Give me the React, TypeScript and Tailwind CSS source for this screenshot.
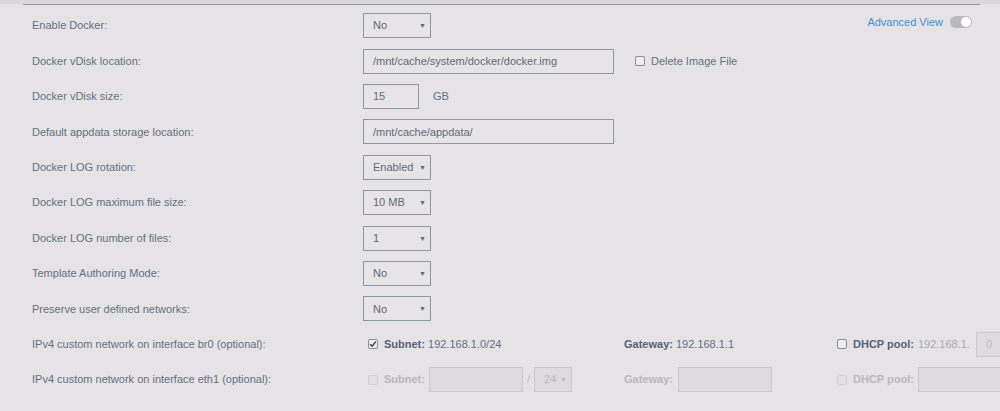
import React from "react";

function Select({ value, width = "w-[68px]", disabled = false }: { value: string; width?: string; disabled?: boolean }) {
  return (
    <div
      className={`flex h-[25px] shrink-0 items-center justify-between border pl-[9px] pr-[4px] text-[11px] ${width} ${
        disabled ? "border-[#c9c8cc] bg-[#dddbde] text-[#b9b8bc]" : "border-[#8f97a2] bg-[#e6e4e7] text-[#5f6a78]"
      }`}
    >
      <span>{value}</span>
      <span className="text-[7px] leading-none">▼</span>
    </div>
  );
}

function Input({ value = "", width, disabled = false }: { value?: string; width: string; disabled?: boolean }) {
  return (
    <div
      className={`flex h-[25px] shrink-0 items-center border pl-[9px] text-[11px] ${width} ${
        disabled ? "border-[#c9c8cc] bg-[#dddbde] text-[#b9b8bc]" : "border-[#8f97a2] bg-[#e6e4e7] text-[#5f6a78]"
      }`}
    >
      {value}
    </div>
  );
}

function Check({ checked = false, disabled = false }: { checked?: boolean; disabled?: boolean }) {
  return (
    <span
      className={`flex h-[10px] w-[10px] shrink-0 items-center justify-center rounded-[2px] border ${
        disabled ? "border-[#cfced2] bg-[#e2e0e3]" : "border-[#8a8f98] bg-[#ecebee]"
      }`}
    >
      {checked && (
        <svg viewBox="0 0 10 10" className="h-[8px] w-[8px]">
          <path d="M1.5 5.2 L4 7.6 L8.5 2" fill="none" stroke="#3c3f46" strokeWidth="1.8" />
        </svg>
      )}
    </span>
  );
}

function Row({ label, children }: { label: string; children?: React.ReactNode }) {
  return (
    <div className="flex h-[35.4px] items-center whitespace-nowrap">
      <div className="w-[331px] shrink-0 text-[11px] text-[#647081]">{label}</div>
      <div className="flex items-center">{children}</div>
    </div>
  );
}

export default function App() {
  return (
    <div className="relative h-[411px] w-[1000px] overflow-hidden bg-[#e5e3e6]" style={{ fontFamily: '"Liberation Sans", Arial, sans-serif' }}>
      <div className="h-[4px] bg-[#d9d7dc]" />
      <div className="ml-[23px] mr-[20px] h-px bg-[#8f97a3]" />

      <div className="absolute right-[28px] top-[14px] flex items-center gap-[7px]">
        <span className="text-[11px] text-[#3e8fd3]">Advanced View</span>
        <span className="flex h-[12px] w-[22px] items-center justify-end rounded-full bg-[#b9b8bc] pr-[1px]">
          <span className="h-[10px] w-[10px] rounded-full bg-white" />
        </span>
      </div>

      <div className="pl-[32px] pt-[3px]">
        <Row label="Enable Docker:">
          <Select value="No" />
        </Row>
        <Row label="Docker vDisk location:">
          <Input value="/mnt/cache/system/docker/docker.img" width="w-[251px]" />
          <span className="ml-[21px] flex items-center gap-[6px] text-[11px] text-[#647081]">
            <Check />
            Delete Image File
          </span>
        </Row>
        <Row label="Docker vDisk size:">
          <Input value="15" width="w-[56px]" />
          <span className="ml-[14px] text-[11px] text-[#647081]">GB</span>
        </Row>
        <Row label="Default appdata storage location:">
          <Input value="/mnt/cache/appdata/" width="w-[251px]" />
        </Row>
        <Row label="Docker LOG rotation:">
          <Select value="Enabled" />
        </Row>
        <Row label="Docker LOG maximum file size:">
          <Select value="10 MB" />
        </Row>
        <Row label="Docker LOG number of files:">
          <Select value="1" />
        </Row>
        <Row label="Template Authoring Mode:">
          <Select value="No" />
        </Row>
        <Row label="Preserve user defined networks:">
          <Select value="No" />
        </Row>
        <Row label="IPv4 custom network on interface br0 (optional):">
          <div className="flex w-[261px] shrink-0 items-center gap-[6px] pl-[5px] text-[11px] text-[#647081]">
            <Check checked />
            <span>
              <b className="text-[#56627a]">Subnet:</b> 192.168.1.0/24
            </span>
          </div>
          <div className="w-[213px] shrink-0 text-[11px] text-[#647081]">
            <b className="text-[#56627a]">Gateway:</b> 192.168.1.1
          </div>
          <div className="flex shrink-0 items-center text-[11px]">
            <Check />
            <b className="ml-[6px] text-[#56627a]">DHCP pool:</b>
            <span className="ml-[4px] text-[#a9a9b0]">192.168.1.</span>
            <span className="ml-[6px]">
              <Input value="0" width="w-[40px]" disabled />
            </span>
          </div>
        </Row>
        <Row label="IPv4 custom network on interface eth1 (optional):">
          <div className="flex w-[261px] shrink-0 items-center pl-[5px] text-[11px] text-[#b9b8bc]">
            <Check disabled />
            <b className="ml-[6px] mr-[4px]">Subnet:</b>
            <Input width="w-[94px]" disabled />
            <span className="mx-[4px]">/</span>
            <Select value="24" width="w-[38px]" disabled />
          </div>
          <div className="flex w-[213px] shrink-0 items-center gap-[5px] text-[11px] text-[#b9b8bc]">
            <b>Gateway:</b>
            <Input width="w-[94px]" disabled />
          </div>
          <div className="flex shrink-0 items-center text-[11px] text-[#b9b8bc]">
            <Check disabled />
            <b className="ml-[6px] mr-[4px]">DHCP pool:</b>
            <Input width="w-[90px]" disabled />
          </div>
        </Row>
      </div>
    </div>
  );
}
